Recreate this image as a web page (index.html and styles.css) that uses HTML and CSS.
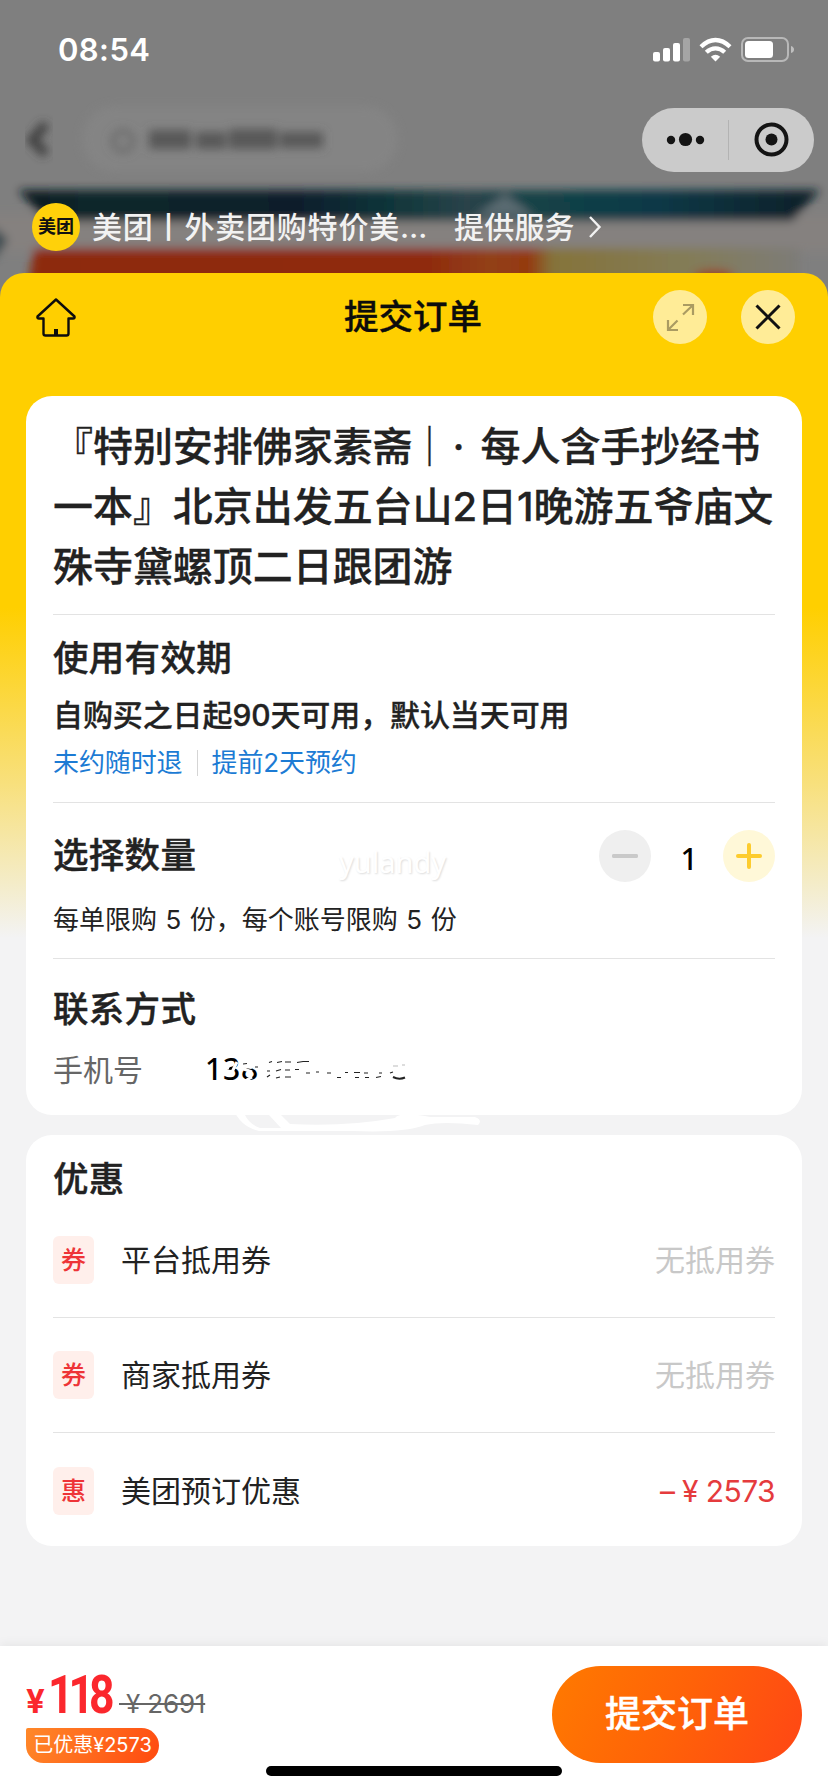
FILE: index.html
```html
<!DOCTYPE html>
<html lang="zh-CN">
<head>
<meta charset="utf-8">
<title>提交订单</title>
<link rel="stylesheet" href="styles.css">
</head>
<body>
<div class="screen">
  <svg class="backdrop" viewBox="0 0 828 320" width="828" height="320" aria-hidden="true">
    <defs>
      <filter id="soft" x="-10%" y="-60%" width="120%" height="220%"><feGaussianBlur stdDeviation="5"/></filter>
      <filter id="mid" x="-50%" y="-60%" width="200%" height="220%"><feGaussianBlur stdDeviation="5"/></filter>
      <linearGradient id="teal" x1="0" x2="1">
        <stop offset="0" stop-color="#0a1a20"/><stop offset=".1" stop-color="#10282c"/><stop offset=".35" stop-color="#0c1e2c"/><stop offset=".48" stop-color="#12383c"/><stop offset=".56" stop-color="#2a434a"/><stop offset=".64" stop-color="#124347"/><stop offset=".8" stop-color="#103846"/><stop offset="1" stop-color="#081f27"/>
      </linearGradient>
      <linearGradient id="warm" x1="0" x2="1">
        <stop offset="0" stop-color="#8d2a0c"/><stop offset=".52" stop-color="#8f2b0d"/><stop offset=".6" stop-color="#92401a"/><stop offset=".65" stop-color="#94380f"/><stop offset=".68" stop-color="#85733a"/><stop offset=".86" stop-color="#837c58"/><stop offset="1" stop-color="#7d7b78"/>
      </linearGradient>
    </defs>
    <rect width="828" height="320" fill="#7f7f7f"/>
    <rect x="82" y="106" width="316" height="66" rx="33" fill="#848484" filter="url(#mid)"/>
    <path d="M46 124 L32 140 L46 154" fill="none" stroke="#3c3c3c" stroke-width="9" filter="url(#mid)"/>
    <g filter="url(#mid)" fill="#585858">
      <circle cx="123" cy="141" r="10" fill="none" stroke="#666" stroke-width="4"/>
      <rect x="149" y="130" width="42" height="19"/><rect x="196" y="132" width="30" height="17"/><rect x="229" y="129" width="48" height="20"/><rect x="280" y="132" width="43" height="16"/>
    </g>
    <g filter="url(#soft)">
      <rect x="-20" y="214" width="870" height="38" fill="#85817f"/>
      <path d="M18 190H820L792 221H46Z" fill="url(#teal)"/>
      <path d="M475 216L505 194L535 216Z" fill="#5a6b71"/>
      <path d="M-8 225L8 240L-8 262Z" fill="#36474d"/>
      <path d="M34 248H800V310H24Z" fill="url(#warm)"/>
      <ellipse cx="714" cy="276" rx="20" ry="6" fill="#9a3d1c"/>
    </g>
  </svg>

  <header class="statusbar">
    <span class="clock">08:54</span>
    <svg class="status-icons" width="144" height="28" viewBox="0 0 144 28">
      <g fill="#fff">
        <rect x="3" y="16" width="7" height="9.500" rx="2"/><rect x="13" y="12" width="7" height="13.500" rx="2"/><rect x="23" y="7" width="7" height="18.500" rx="2"/>
        <rect x="33" y="2" width="7" height="23.500" rx="2" opacity=".3"/>
        <path d="M65.500 25.500L60.800 20.800Q65.500 16.800 70.200 20.800Z"/>
      </g>
      <g fill="none" stroke="#fff" stroke-width="4.300">
        <path d="M51 10.800Q58 4 65.500 4Q73 4 80 10.800"/><path d="M56.300 16.300Q60.500 12.300 65.500 12.300Q70.500 12.300 74.700 16.300"/>
      </g>
      <rect x="92" y="2" width="46" height="23" rx="6" fill="none" stroke="#fff" stroke-opacity=".45" stroke-width="2"/>
      <rect x="95" y="5" width="28" height="17" rx="3.500" fill="#fff"/>
      <path d="M141 10Q144 11 144 13.500Q144 16 141 17Z" fill="#fff" opacity=".5"/>
    </svg>
  </header>

  <div class="navrow">
    <div class="capsule">
      <svg width="172" height="64" viewBox="0 0 172 64">
        <g fill="#141414"><circle cx="29" cy="32" r="4.200"/><circle cx="43.500" cy="31.500" r="6.600"/><circle cx="58" cy="32" r="4.200"/><circle cx="129.500" cy="31.500" r="6"/></g>
        <path d="M86.500 12V52" stroke="#b3b3b3"/>
        <circle cx="129.500" cy="31.500" r="15" fill="none" stroke="#141414" stroke-width="4"/>
      </svg>
    </div>
  </div>

  <div class="provider">
    <span class="logo">美团</span>
    <span class="provider-name">美团丨外卖团购特价美…</span>
    <span class="provider-by">提供服务</span>
    <svg width="14" height="24" viewBox="0 0 14 24"><path d="M2 2L11.500 12L2 22" fill="none" stroke="#f2f2f2" stroke-width="2.400"/></svg>
  </div>

  <main class="sheet">
    <div class="sheet-head">
      <svg class="home" width="42" height="42" viewBox="0 0 42 42" fill="none" stroke="#0d0d0d" stroke-width="2.400" stroke-linejoin="round" stroke-linecap="round">
        <path d="M21 3.500L39.500 20.500Q40 22.500 38 22.500H33.500V37.500Q33.500 39.500 31.500 39.500H10.500Q8.500 39.500 8.500 37.500V22.500H4Q2 22.500 2.500 20.500Z"/><path d="M21 33V39" stroke-width="4" stroke-linecap="butt"/>
      </svg>
      <h1>提交订单</h1>
      <div class="head-actions">
        <span class="round"><svg width="54" height="54" viewBox="0 0 54 54" fill="none" stroke="#aa9b62" stroke-width="2.200"><path d="M30 24.500L40 15M30 15H40V25M24.500 30.500L15 40M15 30V40H25"/></svg></span>
        <span class="round"><svg width="54" height="54" viewBox="0 0 54 54" fill="none" stroke="#111" stroke-width="3"><path d="M15.500 15.500L38.500 38.500M38.500 15.500L15.500 38.500"/></svg></span>
      </div>
    </div>

    <section class="card">
      <div class="product">『特别安排佛家素斋<span class="bar">｜</span><span class="dot">·</span>每人含手抄经书<br>一本』北京出发五台山2日1晚游五爷庙文<br>殊寺黛螺顶二日跟团游</div>
      <div class="validity">
        <h2>使用有效期</h2>
        <p class="valid-text">自购买之日起90天可用，默认当天可用</p>
        <p class="tags"><span>未约随时退</span><i></i><span>提前2天预约</span></p>
      </div>
      <div class="quantity">
        <div class="qty-row">
          <h2>选择数量</h2>
          <span class="watermark">yulandy</span>
          <div class="stepper">
            <span class="step minus"></span><span class="count">1</span><span class="step plus"></span>
          </div>
        </div>
        <p class="limit">每单限购 5 份，每个账号限购 5 份</p>
      </div>
      <div class="contact">
        <h2>联系方式</h2>
        <div class="phone"><span class="label">手机号</span><span class="number">138</span></div>
        <svg class="smudge" width="300" height="100" viewBox="0 0 300 100">
          <g fill="none" stroke="#fff" stroke-width="3"><path d="M26 23L34 23M26 29L35 20M37 27L42 17"/><path d="M50 36L57 32M46 23L57 27" /></g>
          <path d="M45 12H66V20L56 24L45 22Z" fill="#fff"/>
          <g stroke="#222" stroke-width="1.200" fill="none">
            <path d="M48 19L52 18.500M60 22H63M74 17.500L77 16.500M82 17.500L87 16.500M90 17H96M102 17.500L108 16.500H114"/>
            <path d="M72 26H75M81 26L86 24.500M90 25H95M100 24.500H104M72 32L75 30M81 33L85 32M90 32H96"/>
            <path d="M111 28H115M121 27H124M132 28H136M142 32.500H146M150 27.500H153M159 27.500H165M169 28H173M160 32.500H164M170 32.500H174M181 32.500L186 31.500M184 28H187M195 28L198 27"/>
            <path d="M198 21H203M207 20H210" stroke="#bbb"/><path d="M198 32Q204 35 210 32.500" stroke-width="2"/>
          </g>
          <path d="M38 64Q46 82 64 86H158Q210 88 230 80Q248 76 283 80Q288 75 280 72H235Q205 66 200 73Q150 82 95 79L80 64ZM50 70H74L86 83H65Q54 79 50 70Z" fill="#fff" fill-rule="evenodd"/>
        </svg>
      </div>
    </section>

    <section class="card deals">
      <h2>优惠</h2>
      <div class="deal"><span class="badge">券</span><span>平台抵用券</span><span class="none">无抵用券</span></div>
      <div class="deal"><span class="badge">券</span><span>商家抵用券</span><span class="none">无抵用券</span></div>
      <div class="deal"><span class="badge">惠</span><span>美团预订优惠</span><span class="minus-price">– ¥ 2573</span></div>
    </section>
  </main>

  <footer class="paybar">
    <div class="prices">
      <div class="price-row"><span class="yen">¥</span><span class="amount">118</span><s>&nbsp;¥ 2691</s></div>
      <span class="saved">已优惠¥2573</span>
    </div>
    <button class="submit">提交订单</button>
    <span class="home-indicator"></span>
  </footer>
</div>
</body>
</html>
```
FILE: styles.css
```css
* { box-sizing: border-box; margin: 0; padding: 0; }
body { width: 828px; height: 1792px; overflow: hidden; font-family: Inter, "Noto Sans CJK SC", sans-serif; color: #222; }
svg { display: block; }
.screen { position: relative; width: 828px; height: 1792px; display: flex; flex-direction: column; background: #7f7f7f; }
.backdrop { position: absolute; left: 0; top: 0; }
.statusbar, .navrow, .provider, .sheet { position: relative; }

.statusbar { height: 108px; padding: 36px 34px 0 58px; display: flex; justify-content: space-between; align-items: flex-start; color: #fff; }
.clock { font-size: 31px; font-weight: 600; line-height: 28px; letter-spacing: .4px; }
.navrow { height: 64px; padding-right: 14px; display: flex; justify-content: flex-end; }
.capsule { width: 172px; height: 64px; border-radius: 32px; background: #cbcbcb; }

.provider { height: 101px; padding: 31px 0 0 32px; display: flex; align-items: flex-start; color: #f2f2f2; font-size: 30px; font-weight: 500; line-height: 48px; }
.provider svg { margin: 12px 0 0 14px; }
.logo { width: 48px; height: 48px; border-radius: 50%; background: #ffd10a; color: #111; font-size: 18px; font-weight: 700; line-height: 48px; text-align: center; }
.provider-name { width: 374px; padding-left: 12px; letter-spacing: .8px; white-space: nowrap; }
.provider-by { width: 120px; white-space: nowrap; letter-spacing: .2px; }

.sheet { flex: 1; padding: 0 26px; border-radius: 24px 24px 0 0; background: linear-gradient(#ffcf00 0, #ffcf00 335px, #f8e07c 510px, #f4ecc8 610px, #f3f3f4 665px); }
.sheet-head { height: 123px; padding: 17px 7px 0 9px; display: grid; grid-template-columns: 309px auto 1fr; align-items: start; }
.home { margin-top: 6px; }
.sheet-head h1 { font-size: 34.500px; font-weight: 500; line-height: 54px; color: #0c0c0c; -webkit-text-stroke: .4px; }
.head-actions { display: flex; justify-content: flex-end; gap: 34px; }
.round { width: 54px; height: 54px; border-radius: 50%; background: #ffec97; }

.card { background: #fff; border-radius: 26px; padding: 0 27px; }
h2 { font-size: 35.500px; font-weight: 500; line-height: 44px; letter-spacing: .3px; -webkit-text-stroke: .4px; }
.product { height: 219px; padding-top: 21px; border-bottom: 1px solid #e3e3e3; font-size: 40px; font-weight: 500; line-height: 60px; letter-spacing: -.05px; white-space: nowrap; -webkit-text-stroke: .3px; }
.bar, .dot { display: inline-block; text-align: center; }
.bar { width: 37px; text-indent: -3px; }
.dot { width: 31px; padding-right: 13px; }
.validity { height: 188px; padding-top: 22px; border-bottom: 1px solid #e3e3e3; }
.valid-text { margin-top: 14px; font-size: 30px; font-weight: 500; line-height: 40px; letter-spacing: -.1px; white-space: nowrap; -webkit-text-stroke: .3px; }
.tags { margin-top: 9px; display: flex; align-items: center; font-size: 26px; line-height: 38px; letter-spacing: -.1px; color: #1c7bd4; }
.tags i { width: 1px; height: 26px; margin: 0 14px; background: #d5d5d5; }
.quantity { height: 156px; padding-top: 26px; border-bottom: 1px solid #e3e3e3; }
.qty-row { height: 54px; display: flex; align-items: center; }
.qty-row h2 { width: 286px; }
.watermark { font-family: "Noto Sans", sans-serif; font-size: 29px; line-height: 40px; color: #fff; text-shadow: 1px 1px 2px #ddd; padding-top: 11px; }
.stepper { margin-left: auto; display: flex; align-items: center; }
.step { width: 52px; height: 52px; border-radius: 50%; display: grid; place-items: center; }
.step::before, .step::after { content: ""; grid-area: 1 / 1; width: 26px; height: 4px; border-radius: 2px; background: #c9c9c9; }
.step.minus { background: #efefef; }
.step.plus { background: #fff8d8; }
.step.plus::before, .step.plus::after { background: #fdcc2e; }
.step.plus::after { transform: rotate(90deg); }
.count { width: 72px; padding: 6px 0 0 4px; text-align: center; font-family: "Noto Sans", sans-serif; font-size: 30px; line-height: 36px; color: #000; font-weight: 500; }
.limit { margin-top: 17px; font-size: 26px; line-height: 40px; white-space: nowrap; word-spacing: 1.200px; }
.contact { position: relative; height: 156px; padding-top: 29px; }
.phone { display: flex; margin-top: 18px; font-size: 30px; line-height: 40px; }
.label { width: 152px; color: #666; }
.number { color: #000; font-weight: 500; font-family: "Noto Sans", sans-serif; line-height: 38px; letter-spacing: .8px; }
.smudge { position: absolute; left: 142px; top: 86px; }

.deals { margin-top: 20px; height: 411px; padding-top: 23px; }
.deals h2 { height: 45px; }
.deal { height: 115px; display: flex; align-items: center; border-bottom: 1px solid #e3e3e3; font-size: 30px; line-height: 40px; }
.deal:last-child { border-bottom: 0; height: 116px; }
.badge { width: 41px; height: 48px; margin-right: 27px; border-radius: 6px; background: #ffefeb; color: #ee3437; font-size: 25px; font-weight: 500; line-height: 48px; text-align: center; }
.none, .minus-price { margin-left: auto; color: #c8c8c8; }
.minus-price { color: #e53b3d; letter-spacing: -.6px; }

.paybar { position: relative; height: 146px; flex: none; padding: 20px 26px 0; display: flex; justify-content: space-between; background: #fff; box-shadow: 0 -2px 10px rgba(0,0,0,.06); }
.price-row { height: 62px; display: flex; align-items: baseline; line-height: 58px; color: #fb272d; }
.yen { width: 24px; font-size: 33px; font-weight: 700; }
.amount { width: 69px; font-family: Roboto, sans-serif; font-size: 53px; font-weight: 700; letter-spacing: -6px; transform: translateX(-2px) scaleX(.84); transform-origin: 0 0; }
.price-row s { font-size: 26px; color: #666; letter-spacing: -.2px; white-space: nowrap; }
.saved { display: block; width: 133px; height: 35px; border-radius: 2px 18px 18px 18px; background: linear-gradient(115deg, #ff8829, #ff4a10); color: #fff; font-size: 20px; line-height: 34px; text-align: center; white-space: nowrap; }
.submit { width: 250px; height: 97px; border: 0; border-radius: 49px; background: linear-gradient(115deg, #ff7a00, #ff6208 50%, #ff4615); color: #fff; font: 500 36px/95px Inter, "Noto Sans CJK SC", sans-serif; -webkit-text-stroke: .4px; }
.home-indicator { position: absolute; left: 266px; top: 120px; width: 296px; height: 10px; border-radius: 5px; background: #000; }
```
